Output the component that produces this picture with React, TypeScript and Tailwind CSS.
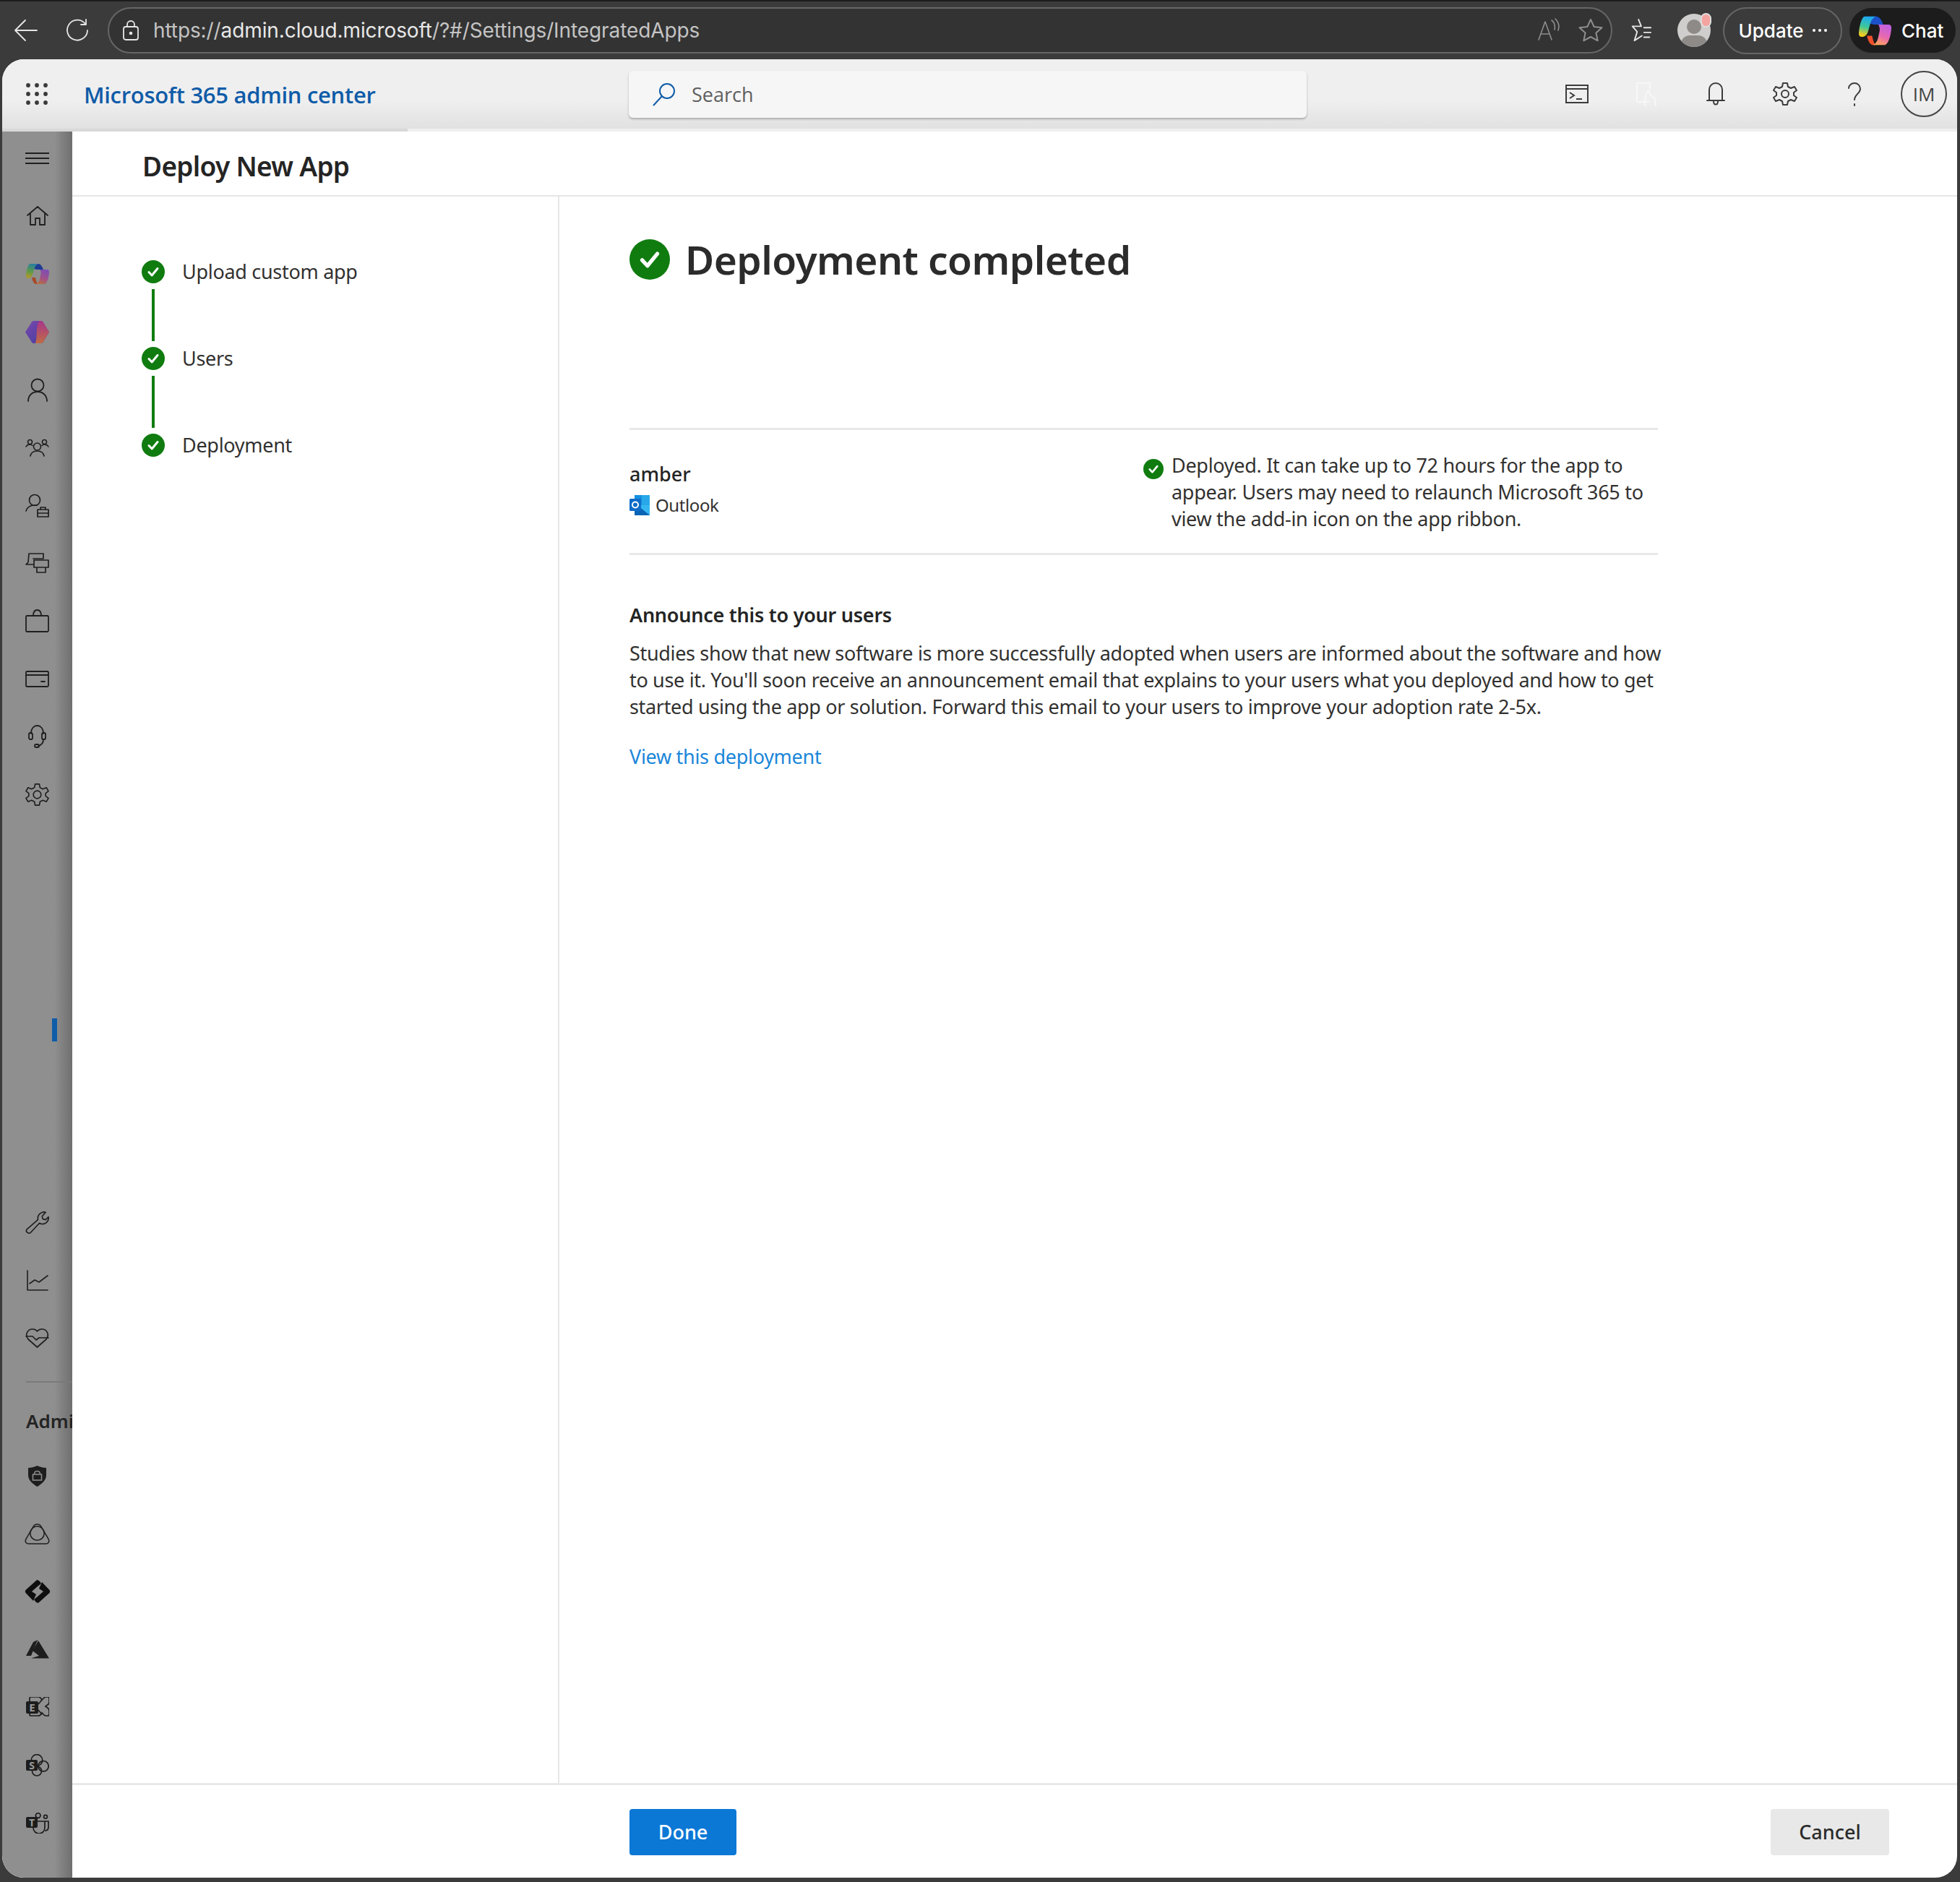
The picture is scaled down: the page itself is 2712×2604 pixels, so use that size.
import type { ReactNode } from "react";

const S = ({ w = 36, h = 36, box = "0 0 24 24", sw = 1.4, children }: { w?: number; h?: number; box?: string; sw?: number; children: ReactNode }) => (
  <svg width={w} height={h} viewBox={box} fill="none" stroke="currentColor" strokeWidth={sw} strokeLinejoin="round" strokeLinecap="round">
    {children}
  </svg>
);

const Check = ({ size }: { size: number }) => (
  <svg width={size} height={size} viewBox="0 0 32 32" className="shrink-0">
    <circle cx="16" cy="16" r="16" fill="#107c10" />
    <path d="M10 16.5l4.2 4.5L22 11.5" fill="none" stroke="#fff" strokeWidth="3" strokeLinecap="round" strokeLinejoin="round" />
  </svg>
);

const Copilot = ({ w, h, id, colors }: { w: number; h: number; id: string; colors: string[] }) => (
  <svg width={w} height={h} viewBox="0 0 32 28" className="shrink-0">
    <defs>
      <linearGradient id={`${id}a`} x1="0.4" y1="0" x2="0.2" y2="1">
        <stop offset="0" stopColor={colors[0]} />
        <stop offset="0.5" stopColor={colors[1]} />
        <stop offset="0.9" stopColor={colors[2]} />
      </linearGradient>
      <linearGradient id={`${id}b`} x1="0.7" y1="0" x2="0.3" y2="1">
        <stop offset="0" stopColor={colors[3]} />
        <stop offset="0.55" stopColor={colors[4]} />
        <stop offset="1" stopColor={colors[5]} />
      </linearGradient>
    </defs>
    <path d="M8 19c1 5 3 9 6 9h3c-3-2-3-6-4-9z" fill={colors[6]} />
    <path d="M17 0c3 0 5 3 7 8h-9l-4-1c1-3 3-7 6-7z" fill={colors[7]} />
    <path d="M6 0h11c-3 1-5 4-6 8l-2 7c-1 3-3 5-6 5-2 0-3-1-3-3 0-5 2-13 3.500-15C4.300.700 5 0 6 0z" fill={`url(#${id}a)`} />
    <path d="M19 8h10c2 0 3 1 3 3 0 5-2 13-4 15-1 1.500-2 2-3 2H13c3 0 5-3 6-7l1.500-7c.300-3-.500-5-1.500-6z" fill={`url(#${id}b)`} />
  </svg>
);

const Outlook = () => (
  <svg width="28" height="28" viewBox="0 0 28 28" className="shrink-0">
    <rect x="7" y="0" width="21" height="14" fill="#1490df" />
    <rect x="17" y="0" width="11" height="14" fill="#28a8ea" />
    <path d="M7 14h21v14H7z" fill="#0a64b5" />
    <path d="M11 14l17 14V14z" fill="#35b8f1" />
    <rect x="0" y="5" width="16" height="17" rx="1.5" fill="#0f6cc9" />
    <circle cx="8" cy="13.5" r="4" fill="none" stroke="#fff" strokeWidth="2" />
  </svg>
);

const Letter = ({ x, y, size, children }: { x: number; y: number; size: number; children: string }) => (
  <text x={x} y={y} fontSize={size} fontWeight={700} textAnchor="middle" fill="#9a9a9a" stroke="none" fontFamily="'Noto Sans', sans-serif">
    {children}
  </text>
);

const railTop: ReactNode[] = [
  <S key="home" box="0 0 30 30" w={30} h={30} sw={1.8}><path d="M1 14L15 2l14 12M5 11v16h7v-9h6v9h7V11" /></S>,
  <Copilot key="cp" w={32} h={28} id="rc" colors={["#2a7f9c", "#5b9a4a", "#a8982c", "#7d4fb4", "#a0508a", "#b8703e", "#a84a28", "#1f3c94"]} />,
  <svg key="hex" width="33" height="31" viewBox="0 0 33 31">
    <defs>
      <linearGradient id="rhA" x1="0" y1="0" x2="1" y2="1"><stop offset="0" stopColor="#7a46ac" /><stop offset="1" stopColor="#3f3fa0" /></linearGradient>
      <linearGradient id="rhB" x1="0.5" y1="0" x2="0.5" y2="1"><stop offset="0" stopColor="#a8348c" /><stop offset="1" stopColor="#c06c44" /></linearGradient>
    </defs>
    <path d="M9 1.500Q10 0 11.500 0H21.500Q23.500 0 24.500 1.500L33 15.500 24.500 29.500Q23.500 31 21.500 31H11.500Q10 31 9 29.500L0 15.500z" fill="url(#rhA)" />
    <path d="M19 0h2.500Q23.500 0 24.500 1.500L33 15.500 24.500 29.500Q23.500 31 21.500 31H14C17 23 14 8 19 0z" fill="url(#rhB)" />
  </svg>,
  <S key="user" box="0 0 28 33" w={28} h={33} sw={1.8}><circle cx="14" cy="10" r="8.500" /><path d="M1 32c0-8 6-13 13-13s13 5 13 13" /></S>,
  <S key="group" box="0 0 33 25" w={33} h={25} sw={1.6}><circle cx="16.500" cy="11" r="5" /><path d="M7 24c1-5 4-7 9.500-7s8.500 2 9.500 7" /><circle cx="6.500" cy="4.500" r="3" /><circle cx="26.500" cy="4.500" r="3" /><path d="M1 11c1-2 3-3 5.500-3 1.500 0 2.500.5 3.500 1.500M32 11c-1-2-3-3-5.500-3-1.500 0-2.500.5-3.500 1.500" /></S>,
  <S key="roles" box="0 0 33 33" w={33} h={33} sw={1.7}><circle cx="13" cy="9" r="7.500" /><path d="M1 24c1-5 6-8 12-8 1 0 2 0 3 .3" /><rect x="17" y="22" width="15" height="10" /><path d="M21 22v-3h7v3M17 27h15" /></S>,
  <S key="print" box="0 0 33 28" w={33} h={28} sw={1.7}><path d="M25 7V1H5L4 13l-3 3h10M11 8h14" /><path d="M12 10h20v10H12zM16 20v7h12v-7" /></S>,
  <S key="bag" box="0 0 33 32" w={33} h={32} sw={1.8}><rect x="1" y="9" width="31" height="22" rx="1.500" /><path d="M11 9c0-5 2-8 5.500-8S22 4 22 9" /></S>,
  <S key="card" box="0 0 33 23" w={33} h={23} sw={1.8}><rect x="1" y="1" width="31" height="21" rx="1.500" /><path d="M1 6h31M22 15h5" /></S>,
  <S key="head" box="0 0 25 32" w={25} h={32} sw={1.8}><path d="M4 12V11C4 5 8 1 12.500 1S21 5 21 11v1" /><rect x="1" y="11" width="5" height="9" rx="2" /><rect x="19" y="11" width="5" height="9" rx="2" /><path d="M21 20c0 5-3 8-7 9" /><rect x="9" y="27" width="6" height="4" rx="2" /></S>,
  <S key="gear" box="0 0 34 34" w={33} h={33} sw={1.7}><circle cx="17" cy="17" r="5.500" /><path d="M14 2h6l1 5 4 2 5-2 3 5-4 3v4l4 3-3 5-5-2-4 2-1 5h-6l-1-5-4-2-5 2-3-5 4-3v-4l-4-3 3-5 5 2 4-2z" /></S>,
];

const railBottom: ReactNode[] = [
  <S key="wrench" box="0 0 34 34" w={33} h={33} sw={1.7}><path d="M2 27L18 13c-1-5 2-10 8-11 1 0 2 0 3 .5L24 8l1 4 4 1 4-4c1 6-4 11-10 10-1 0-2-.3-3-1L7 32c-3 1-7-2-5-5z" /></S>,
  <S key="chart" box="0 0 30 29" w={30} h={29} sw={1.6}><path d="M1 1v27h28" /><path d="M4 19l7-5 6 3 12-9" /></S>,
  <S key="heart" box="0 0 33 27" w={33} h={27} sw={1.7}><path d="M16.500 26L4 15C-1 9 3 1 10 1c3 0 5 1 6.500 3C18 2 20 1 23 1c7 0 11 8 6 14z" /><path d="M1 11h9l5 5 4-3h13" /></S>,
];

const railAdmin: ReactNode[] = [
  <svg key="shield" width="27" height="29" viewBox="0 0 27 29"><path d="M1 3c4 0 8-1 12.500-3C18 2 22 3 26 3v10c0 7-6 12-12.500 16C7 25 1 20 1 13z" fill="#1d1d1d" /><rect x="7.500" y="12" width="12" height="8" fill="none" stroke="#8a8a8a" strokeWidth="1.6" /><path d="M9.500 12c0-6 8-6 8 0" fill="none" stroke="#8a8a8a" strokeWidth="1.6" /></svg>,
  <S key="tri" box="0 0 36 32" w={35} h={31} sw={1.6}><path d="M18 2c-3 0-5 2-6 4L2 23c-2 4 0 7 4 7h24c4 0 6-3 4-7L24 6c-1-2-3-4-6-4z" /><circle cx="18" cy="15" r="10" /></S>,
  <svg key="dia" width="36" height="32" viewBox="0 0 36 32">
    <path id="diaTop" d="M18 0l3 2 2 3-5 4-8 7 6 4-4 9L1.500 18Q0 16 1.500 14L16 1Q17 0 18 0z" fill="#0e0e0e" />
    <path d="M18 0l3 2 2 3-5 4-8 7 6 4-4 9L1.500 18Q0 16 1.500 14L16 1Q17 0 18 0z" fill="#0e0e0e" transform="rotate(180 18 16)" />
  </svg>,
  <svg key="az" width="32" height="26" viewBox="0 0 32 26"><path d="M16 0L10 3 0 22H7z" fill="#1d1d1d" /><path d="M17 1L9 15 18 22 7 25.500H32z" fill="#1d1d1d" /></svg>,
  <svg key="ex" width="32" height="28" viewBox="0 0 32 28" fill="none" stroke="#1d1d1d" strokeWidth="1.7">
    <path d="M5 6V2a2 2 0 0 1 2-2h10c2 0 4 2 5 4l3-3c1-1 2-1 3-1h2a2 2 0 0 1 2 2v5c0 1-.5 2-1 3l-4 3 4 3c.5 1 1 2 1 3v5a2 2 0 0 1-2 2h-2c-1 0-2 0-3-1l-3-3c-1 2-3 4-5 4H7a2 2 0 0 1-2-2v-4" />
    <path d="M17 10l5-6M17 18l5 6" />
    <rect x="0" y="6" width="17" height="17" rx="2" fill="#1d1d1d" stroke="none" />
    <Letter x={8.500} y={20} size={15}>E</Letter>
  </svg>,
  <svg key="sp" width="32" height="31" viewBox="0 0 32 31" fill="none" stroke="#1d1d1d" strokeWidth="1.7">
    <circle cx="15" cy="8.500" r="7.800" />
    <circle cx="24" cy="16.700" r="7.200" />
    <circle cx="15" cy="23.500" r="6.500" />
    <rect x="0" y="8" width="16" height="15" rx="2" fill="#1d1d1d" stroke="none" />
    <Letter x={8} y={20.500} size={14}>S</Letter>
  </svg>,
  <svg key="teams" width="32" height="29" viewBox="0 0 32 29" fill="none" stroke="#1d1d1d" strokeWidth="1.7">
    <circle cx="16.700" cy="4" r="3.300" />
    <circle cx="27" cy="5.700" r="2.400" />
    <path d="M10 12h16v9a8 8 0 0 1-16 0zM26 12h5v8c0 3-2 5-5 5" />
    <rect x="0" y="6" width="16" height="15" rx="2" fill="#1d1d1d" stroke="none" />
    <Letter x={8} y={18.500} size={14}>T</Letter>
  </svg>,
];

const RailRow = ({ children }: { children: ReactNode }) => (
  <div className="h-[80px] flex items-center justify-center text-[#1f1f1f]">{children}</div>
);

const steps = ["Upload custom app", "Users", "Deployment"];

export default function App() {
  return (
    <div className="w-[2712px] h-[2604px] bg-[#3b3b3b] flex flex-col overflow-hidden font-['Noto_Sans',sans-serif] text-[#2b2b2b]">
      {/* BROWSER BAR */}
      <div className="h-[82px] shrink-0 flex items-center border-t-[2px] border-[#1c1c1c] text-[#e6e6e6] font-['Inter',sans-serif]">
        <div className="w-[149px] shrink-0 flex items-center gap-[36px] pl-[18px]">
          <S w={36} h={36} box="0 0 36 36" sw={1.8}><path d="M33 18H3M17 4L3 18l14 14" /></S>
          <S w={34} h={34} box="0 0 34 34" sw={1.8}><path d="M28 8a14 14 0 1 0 3 9M29 2v7h-7" /></S>
        </div>
        <div className="w-[2082px] h-[64px] rounded-full border-[2px] border-[#666] bg-[#333] flex items-center pl-[18px] pr-[10px]">
          <svg width="24" height="30" viewBox="0 0 24 30" fill="none" stroke="#e6e6e6" strokeWidth="1.8"><rect x="2" y="10" width="20" height="18" rx="3" /><path d="M7 10V7a5 5 0 0 1 10 0v3" /><circle cx="12" cy="19" r="1.4" fill="#e6e6e6" /></svg>
          <span className="ml-[19px] text-[28px] tracking-[-0.1px] text-[#e8e8e8] flex-1">
            <span className="text-[#c4c4c4]">https://</span>admin.cloud.microsoft<span className="text-[#c4c4c4]">/?#/Settings/IntegratedApps</span>
          </span>
          <div className="text-[#8e8e8e] flex items-center gap-[22px]">
            <S w={34} h={34} box="0 0 34 34" sw={1.6}><path d="M2 30L11 5l9 25M5 22h12M20 3c4 3 5 8 4 13M25 1c4 4 6 10 4 16" /></S>
            <S w={36} h={36} box="0 0 36 36" sw={2}><path d="M18 3l4.6 10 10.9 1.2-8.1 7.3 2.3 10.8L18 27l-9.7 5.3 2.3-10.8-8.1-7.3L13.4 13z" /></S>
          </div>
        </div>
        <div className="w-[22px] shrink-0" />
        <S w={34} h={34} box="0 0 34 36" sw={2}><path d="M14 2l4 10h-13l7 8-4 13 11-7M22 14h10M22 21h10M22 28h8" /></S>
        <div className="relative ml-[34px] w-[46px] h-[46px] rounded-full bg-[#cfcecc] overflow-hidden shrink-0">
          <div className="mx-auto mt-[8px] w-[20px] h-[20px] rounded-full bg-[#8d8a87]" />
          <div className="mx-auto mt-[2px] w-[36px] h-[24px] rounded-full bg-[#8d8a87]" />
        </div>
        <div className="w-[15px] h-[20px] -ml-[14px] -mt-[28px] rounded-full bg-[#f4a4a0] border-[2px] border-[#ddd] z-10 shrink-0" />
        <div className="ml-[16px] w-[165px] h-[65px] shrink-0 rounded-full border-[2px] border-[#666] flex items-center justify-center gap-[12px] text-[26px] text-white font-medium">
          Update
          <span className="flex gap-[4px]">
            <i className="w-[4px] h-[4px] rounded-full bg-white" />
            <i className="w-[4px] h-[4px] rounded-full bg-white" />
            <i className="w-[4px] h-[4px] rounded-full bg-white" />
          </span>
        </div>
        <div className="ml-[10px] w-[147px] h-[62px] shrink-0 rounded-full bg-[#1c1c1c] flex items-center pl-[13px] gap-[14px] text-[26px] text-white font-medium">
          <Copilot w={45} h={41} id="bc" colors={["#1ea8f0", "#3cc89a", "#f0cc20", "#c060e0", "#e868b0", "#ffa858", "#f0502c", "#1c50c8"]} />
          Chat
        </div>
      </div>

      {/* WINDOW */}
      <div className="flex-1 ml-[3px] mr-[4px] mb-[6px] rounded-[30px] overflow-hidden flex flex-col bg-white">
        {/* ADMIN HEADER */}
        <div className="h-[96px] shrink-0 flex items-center bg-gradient-to-b from-[#efefef] from-60% to-[#e1e1e1] font-['Open_Sans',sans-serif]">
          <svg width="30" height="30" viewBox="0 0 30 30" fill="#3a3a3a" className="ml-[33px]">
            {[3, 15, 27].flatMap((y) => [3, 15, 27].map((x) => <circle key={`${x}-${y}`} cx={x} cy={y} r="2.9" />))}
          </svg>
          <span className="ml-[50px] w-[754px] shrink-0 pt-[2px] text-[31px] font-semibold text-[#0f5ca8] tracking-[-0.3px]">Microsoft 365 admin center</span>
          <div className="w-[938px] h-[65px] shrink-0 rounded-[6px] bg-[#f6f6f6] shadow-[0_2px_3px_rgba(0,0,0,0.25)] flex items-center pl-[32px] gap-[21px]">
            <svg width="34" height="34" viewBox="0 0 34 34" fill="none" stroke="#0f5ca8" strokeWidth="2"><circle cx="21" cy="13" r="10" /><path d="M14 20L2 33" /></svg>
            <span className="pt-[2px] text-[27px] text-[#5f5f5f]">Search</span>
          </div>
          <div className="flex-1 flex items-center justify-end pr-[14px] text-[#3c3c3c]">
            <div className="w-[96px] flex justify-center">
              <S w={34} h={28} box="0 0 34 28" sw={2}><path d="M2 2h30v24H2zM2 7h30M7 12l6 4-6 4M16 21h8" strokeLinejoin="miter" strokeLinecap="butt" /></S>
            </div>
            <div className="w-[96px] flex justify-center text-[#f7f7f7]">
              <S w={30} h={34} box="0 0 30 34" sw={2}><path d="M19 28H2V2h18v8M8 28h3M14 34c-2-4-2-8 0-12 0-4 1-8 4-10l2 6 6 4 2 12" /></S>
            </div>
            <div className="w-[96px] flex justify-center">
              <S w={26} h={34} box="0 0 26 34" sw={2}><path d="M4 26V11C4 6 8 2 13 2s9 4 9 9v15M1 26h24M10 27c0 6 6 6 6 0" /></S>
            </div>
            <div className="w-[96px] flex justify-center">
              <S w={34} h={34} box="0 0 34 34" sw={2}><circle cx="17" cy="17" r="5" /><path d="M14 2h6l1 5 4 2 5-2 3 5-4 3v4l4 3-3 5-5-2-4 2-1 5h-6l-1-5-4-2-5 2-3-5 4-3v-4l-4-3 3-5 5 2 4-2z" /></S>
            </div>
            <div className="w-[95px] flex justify-center">
              <S w={20} h={34} box="0 0 20 34" sw={2}><path d="M2 9c0-4 4-7 8-7s8 3 8 8c0 6-8 8-8 15M10 31v2" /></S>
            </div>
            <div className="w-[64px] h-[64px] ml-[17px] rounded-full border-[2px] border-[#444] flex items-center justify-center text-[26px] text-[#444]">IM</div>
          </div>
        </div>
        <div className="h-[4px] shrink-0 flex bg-[#efefef]"><div className="w-[561px] bg-[#d8d8d8]" /></div>

        <div className="flex-1 flex min-h-0">
          {/* LEFT RAIL */}
          <div className="relative w-[97px] shrink-0 flex flex-col bg-gradient-to-r from-[#8f8f8f] from-75% to-[#6f6f6f] rounded-bl-[30px]">
            <div className="h-[74px] mb-[3px] flex items-center justify-center text-[#1f1f1f]">
              <div className="w-[33px] flex flex-col gap-[5px]">
                <i className="h-[2px] bg-current" />
                <i className="h-[2px] bg-current" />
                <i className="h-[2px] bg-current" />
              </div>
            </div>
            {railTop.map((icon, i) => (
              <RailRow key={i}>{icon}</RailRow>
            ))}
            <div className="absolute left-[69px] top-[1227px] w-[7px] h-[32px] bg-[#0f5ca8]" />
            <div className="mt-auto">
              {railBottom.map((icon, i) => (
                <RailRow key={i}>{icon}</RailRow>
              ))}
              <div className="ml-[33px] mt-[20px] h-[2px] bg-[#7a7a7a]" />
              <div className="h-[89px] pl-[33px] pt-[34px] overflow-hidden text-[26px] leading-[38px] font-semibold text-[#242424] whitespace-nowrap">Admin centers</div>
              {railAdmin.map((icon, i) => (
                <RailRow key={i}>{icon}</RailRow>
              ))}
              <div className="h-[36px]" />
            </div>
          </div>

          {/* CONTENT */}
          <div className="flex-1 min-w-0 flex flex-col font-['Noto_Sans',sans-serif]">
            <div className="h-[90px] shrink-0 border-b-[2px] border-[#e6e6e6] pl-[97px] pt-[8px] flex items-center">
              <h1 className="text-[37px] font-semibold tracking-[-0.7px] text-[#242424]">Deploy New App</h1>
            </div>

            <div className="flex-1 flex min-h-0">
              {/* WIZARD STEPS */}
              <div className="w-[674px] shrink-0 border-r-[2px] border-[#e6e6e6] pl-[96px] pt-[88px]">
                {steps.map((label, i) => (
                  <div key={label}>
                    <div className="flex items-center gap-[24px] h-[32px]">
                      <Check size={32} />
                      <span className="text-[27px] tracking-[-0.3px] text-[#323130]">{label}</span>
                    </div>
                    {i < steps.length - 1 && <div className="w-[4px] h-[72px] my-[8px] ml-[14px] bg-[#107c10]" />}
                  </div>
                ))}
              </div>

              {/* RESULT */}
              <div className="flex-1 pl-[97px] pt-[59px]">
                <div className="w-[1423px]">
                  <div className="flex items-center gap-[21px] h-[56px]">
                    <Check size={56} />
                    <h2 className="text-[55px] font-semibold tracking-[-0.55px] text-[#2b2b2b]">Deployment completed</h2>
                  </div>

                  <div className="mt-[205px] h-[176px] border-y-[3px] border-[#e8e8e8] flex">
                    <div className="w-[711px] shrink-0 pt-[42px]">
                      <div className="text-[27px] leading-[38px] font-medium text-[#242424]">amber</div>
                      <div className="flex items-center gap-[8px] mt-[6px]">
                        <Outlook />
                        <span className="text-[24px] tracking-[-0.4px] text-[#323130]">Outlook</span>
                      </div>
                    </div>
                    <div className="flex-1 flex gap-[11px] pt-[30px] pr-[10px]">
                      <div className="mt-[10px]"><Check size={28} /></div>
                      <p className="text-[27px] leading-[37px] tracking-[-0.3px] text-[#323130]">
                        Deployed. It can take up to 72 hours for the app to appear. Users may need to relaunch Microsoft 365 to view the add-in icon on the app ribbon.
                      </p>
                    </div>
                  </div>

                  <h3 className="mt-[64px] text-[27px] leading-[37px] font-semibold tracking-[-0.25px] text-[#242424]">Announce this to your users</h3>
                  <p className="mt-[16px] text-[27px] leading-[37px] tracking-[-0.33px] text-[#323130] whitespace-pre">
                    {"Studies show that new software is more successfully adopted when users are informed about the software and how\nto use it. You'll soon receive an announcement email that explains to your users what you deployed and how to get\nstarted using the app or solution. Forward this email to your users to improve your adoption rate 2-5x."}
                  </p>
                  <div className="mt-[32px] text-[27px] leading-[37px] tracking-[-0.3px] text-[#1a86d9]">View this deployment</div>
                </div>
              </div>
            </div>

            {/* FOOTER */}
            <div className="h-[131px] shrink-0 border-t-[3px] border-[#e8e8e8] pl-[771px] pr-[94px] pt-[2px] flex items-center justify-between">
              <button className="w-[148px] h-[64px] rounded-[4px] bg-[#0c78d6] text-white text-[27px] font-medium">Done</button>
              <button className="w-[164px] h-[64px] rounded-[4px] bg-[#e8e8e8] text-[#2b2b2b] text-[27px] font-medium">Cancel</button>
            </div>
          </div>
        </div>
      </div>
    </div>
  );
}
